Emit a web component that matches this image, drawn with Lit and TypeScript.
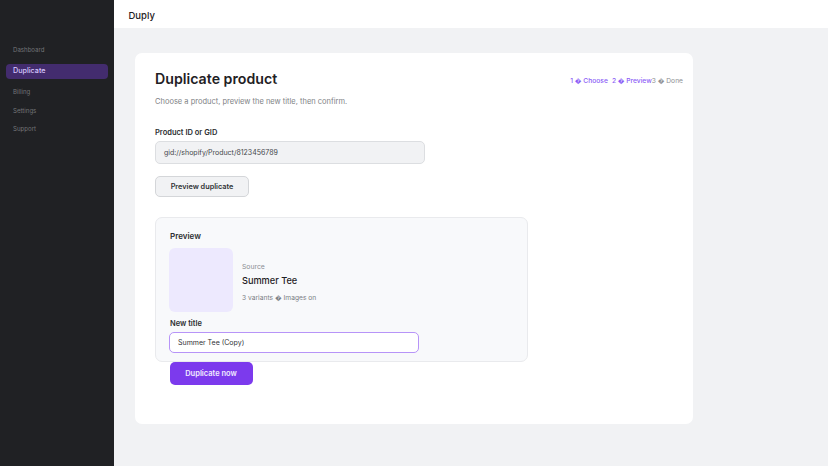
import { LitElement, html, css } from 'lit';
import { customElement } from 'lit/decorators.js';

const NAV = ['Dashboard', 'Duplicate', 'Billing', 'Settings', 'Support'];

@customElement('app-root')
export class AppRoot extends LitElement {
  static styles = css`
    :host {
      display: grid;
      grid-template-columns: 114px 1fr;
      width: 828px;
      height: 466px;
      overflow: hidden;
      font-family: Inter, 'Noto Sans', sans-serif;
      color: #202223;
      background: #f1f2f4;
    }

    .side {
      background: #202124;
      padding: 44px 6px 0;
      display: flex;
      flex-direction: column;
    }

    .nav {
      height: 10px;
      margin-bottom: 8.5px;
      padding-left: 7px;
      font-size: 6.1px;
      line-height: 12px;
      color: #737477;
    }

    .nav.on {
      height: 15px;
      margin-top: 1.5px;
      margin-bottom: 7px;
      border-radius: 4px;
      background: #432c6e;
      color: #d9c9ff;
      font-size: 7.2px;
      font-weight: 500;
      line-height: 13px;
    }

    .main {
      display: flex;
      flex-direction: column;
      min-width: 0;
    }

    .top {
      height: 28px;
      background: #fff;
      padding-left: 14.5px;
      font-size: 9.5px;
      font-weight: 500;
      line-height: 31px;
      color: #1f2124;
    }

    .card {
      box-sizing: border-box;
      width: 558px;
      height: 371px;
      margin: 25px 0 0 21px;
      padding: 15px 20px;
      background: #fff;
      border-radius: 7px;
    }

    .head {
      display: flex;
      justify-content: space-between;
    }

    h1 {
      margin: 0;
      font-size: 14.2px;
      font-weight: 600;
      line-height: 21px;
      color: #1f2124;
    }

    .sub {
      margin: 7px 0 0;
      font-size: 7.5px;
      line-height: 12px;
      color: #808285;
    }

    .steps {
      display: flex;
      margin: 8px -10px 0 0;
      font-size: 6.7px;
      line-height: 10px;
      font-weight: 500;
      white-space: nowrap;
      color: #8b5cf6;
    }

    .steps span {
      margin-right: 4px;
    }

    .steps .off {
      margin-right: 0;
      margin-left: -4px;
      font-weight: 400;
      color: #8f9193;
    }

    .label {
      font-size: 7.5px;
      font-weight: 600;
      line-height: 10px;
      color: #2c2e31;
    }

    .gid {
      margin-top: 20px;
    }

    .field {
      box-sizing: border-box;
      padding-left: 8px;
      font-size: 7px;
      border-radius: 5px;
    }

    .field.gray {
      width: 270px;
      height: 23px;
      margin-top: 3px;
      background: #f1f2f4;
      border: 1px solid #dcdee1;
      line-height: 21px;
      color: #44474b;
    }

    .btn {
      box-sizing: border-box;
      display: flex;
      align-items: center;
      justify-content: center;
      border-radius: 5px;
      font-weight: 600;
    }

    .btn.sec {
      width: 94px;
      height: 21px;
      margin-top: 12px;
      background: #f1f2f4;
      border: 1px solid #d4d6d9;
      color: #303236;
      font-size: 7.3px;
    }

    .preview {
      box-sizing: border-box;
      width: 373px;
      height: 145px;
      margin-top: 20px;
      padding: 12px 14px 0 13px;
      background: #f8f9fb;
      border: 1px solid #e9eaed;
      border-radius: 7px;
    }

    .preview .title {
      padding-left: 1px;
      font-size: 8px;
      font-weight: 600;
      line-height: 12px;
      color: #2c2e31;
    }

    .row {
      display: flex;
      align-items: center;
      gap: 9.5px;
      margin-top: 6px;
    }

    .thumb {
      width: 63.5px;
      height: 64px;
      background: #ede9fe;
      border-radius: 6px;
    }

    .info {
      padding-top: 5px;
    }

    .source {
      font-size: 6.8px;
      line-height: 10px;
      color: #8b8e93;
    }

    .name {
      margin-top: 2px;
      font-size: 9.2px;
      font-weight: 500;
      line-height: 14px;
      color: #1f2124;
    }

    .meta {
      margin-top: 5px;
      font-size: 6.7px;
      line-height: 10px;
      color: #7b7f85;
    }

    .new {
      margin-top: 7px;
      padding-left: 1px;
    }

    .field.focus {
      width: 250px;
      height: 21px;
      margin-top: 3px;
      background: #fff;
      border: 1px solid #b794f8;
      line-height: 19px;
      color: #303236;
    }

    .btn.pri {
      width: 83px;
      height: 23px;
      margin-left: 14.5px;
      background: #7c3aed;
      color: #f1eaff;
      font-size: 7.5px;
    }
  `;

  render() {
    return html`
      <aside class="side">
        ${NAV.map(
          (n) => html`<div class="nav ${n === 'Duplicate' ? 'on' : ''}">${n}</div>`,
        )}
      </aside>
      <div class="main">
        <header class="top">Duply</header>
        <section class="card">
          <div class="head">
            <div>
              <h1>Duplicate product</h1>
              <p class="sub">Choose a product, preview the new title, then confirm.</p>
            </div>
            <div class="steps">
              <span>1 \uFFFD Choose</span>
              <span>2 \uFFFD Preview</span>
              <span class="off">3 \uFFFD Done</span>
            </div>
          </div>
          <div class="label gid">Product ID or GID</div>
          <div class="field gray">gid://shopify/Product/8123456789</div>
          <div class="btn sec">Preview duplicate</div>
          <div class="preview">
            <div class="title">Preview</div>
            <div class="row">
              <div class="thumb"></div>
              <div class="info">
                <div class="source">Source</div>
                <div class="name">Summer Tee</div>
                <div class="meta">3 variants \uFFFD Images on</div>
              </div>
            </div>
            <div class="label new">New title</div>
            <div class="field focus">Summer Tee (Copy)</div>
          </div>
          <div class="btn pri">Duplicate now</div>
        </section>
      </div>
    `;
  }
}
